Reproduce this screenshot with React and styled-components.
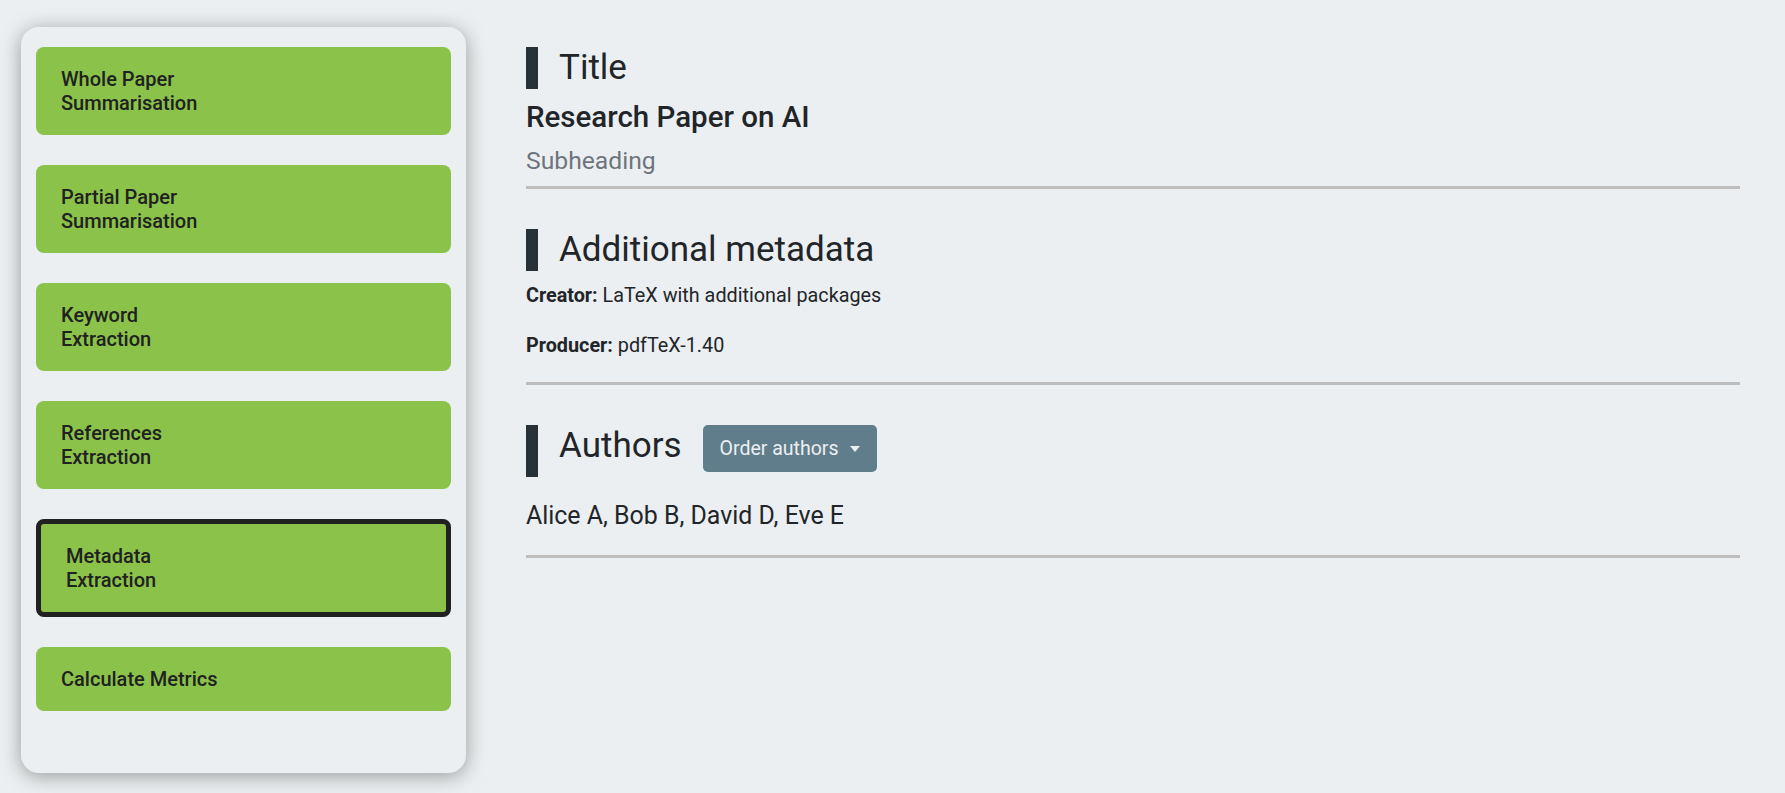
import React from "react";
import styled, { createGlobalStyle } from "styled-components";

const GlobalStyle = createGlobalStyle`
  html, body {
    margin: 0;
    padding: 0;
    background: #eceff1;
    font-family: Roboto, "Liberation Sans", Arial, sans-serif;
    color: #212529;
  }
  * { box-sizing: border-box; }
`;

const Page = styled.div`
  display: flex;
  align-items: flex-start;
  gap: 60px;
  padding: 27px 45px 0 21px;
  min-height: 793px;
`;

const Sidebar = styled.nav`
  flex: 0 0 445px;
  height: 746px;
  background: #eceff1;
  border-radius: 18px;
  box-shadow: 0 3px 20px rgba(0, 0, 0, 0.36);
  padding: 20px 15px;
  display: flex;
  flex-direction: column;
  gap: 30px;
`;

const NavButton = styled.button`
  width: 100%;
  text-align: left;
  background: #8bc34a;
  border: ${(p) => (p.$active ? "5px solid #212121" : "none")};
  border-radius: 8px;
  padding: 20px 25px;
  font-family: Roboto, "Liberation Sans", Arial, sans-serif;
  font-size: 20px;
  font-weight: 500;
  line-height: 24px;
  color: #212121;
  cursor: pointer;
`;

const Main = styled.main`
  flex: 1;
  padding-top: 20px;
  display: flex;
  flex-direction: column;
`;

const Section = styled.section`
  display: flex;
  flex-direction: column;
  margin-bottom: 40px;
`;

const Header = styled.div`
  display: flex;
  align-items: flex-start;
  border-left: 12px solid #263238;
  padding-left: 21px;
  min-height: ${(p) => p.$height || 42}px;
`;

const HeaderText = styled.h2`
  margin: 0;
  font-size: 35px;
  font-weight: 400;
  line-height: 42px;
  color: #212529;
`;

const DropButton = styled.button`
  margin-left: 21px;
  height: 47px;
  padding: 0 17px;
  background: #607d8b;
  border: none;
  border-radius: 5px;
  color: #eceff1;
  font-family: Roboto, "Liberation Sans", Arial, sans-serif;
  font-size: 19.5px;
  font-weight: 400;
  display: flex;
  align-items: center;
  gap: 12px;
  cursor: pointer;

  &::after {
    content: "";
    display: block;
    border-top: 6px solid #eceff1;
    border-left: 5.5px solid transparent;
    border-right: 5.5px solid transparent;
  }
`;

const PaperTitle = styled.h3`
  margin: 11px 0 0;
  font-size: 29.5px;
  font-weight: 500;
  line-height: 35px;
  color: #212529;
`;

const Subheading = styled.div`
  margin-top: 11px;
  font-size: 24.7px;
  line-height: 30px;
  color: #6c757d;
`;

const MetaLine = styled.p`
  margin: ${(p) => (p.$first ? "10px" : "20px")} 0 0;
  font-size: 19.8px;
  line-height: 30px;
  color: #212529;

  & b {
    font-weight: 700;
  }
`;

const AuthorList = styled.p`
  margin: 20px 0 0;
  font-size: 24.9px;
  line-height: 37px;
  color: #212529;
`;

const Divider = styled.hr`
  margin: ${(p) => p.$gap || 21}px 0 0;
  border: none;
  height: 3px;
  background: #bdbdbd;
`;

const tools = [
  ["Whole Paper", "Summarisation"],
  ["Partial Paper", "Summarisation"],
  ["Keyword", "Extraction"],
  ["References", "Extraction"],
  ["Metadata", "Extraction"],
  ["Calculate Metrics"],
];

export default function App() {
  return (
    <>
      <GlobalStyle />
      <Page>
        <Sidebar>
          {tools.map((lines, i) => (
            <NavButton key={i} $active={i === 4}>
              {lines.map((l, j) => (
                <React.Fragment key={j}>
                  {j > 0 && <br />}
                  {l}
                </React.Fragment>
              ))}
            </NavButton>
          ))}
        </Sidebar>
        <Main>
          <Section>
            <Header>
              <HeaderText>Title</HeaderText>
            </Header>
            <PaperTitle>Research Paper on AI</PaperTitle>
            <Subheading>Subheading</Subheading>
            <Divider $gap={10} />
          </Section>
          <Section>
            <Header>
              <HeaderText>Additional metadata</HeaderText>
            </Header>
            <MetaLine $first>
              <b>Creator:</b> LaTeX with additional packages
            </MetaLine>
            <MetaLine>
              <b>Producer:</b> pdfTeX-1.40
            </MetaLine>
            <Divider $gap={21} />
          </Section>
          <Section>
            <Header $height={52}>
              <HeaderText>Authors</HeaderText>
              <DropButton>Order authors</DropButton>
            </Header>
            <AuthorList>Alice A, Bob B, David D, Eve E</AuthorList>
            <Divider $gap={21} />
          </Section>
        </Main>
      </Page>
    </>
  );
}
